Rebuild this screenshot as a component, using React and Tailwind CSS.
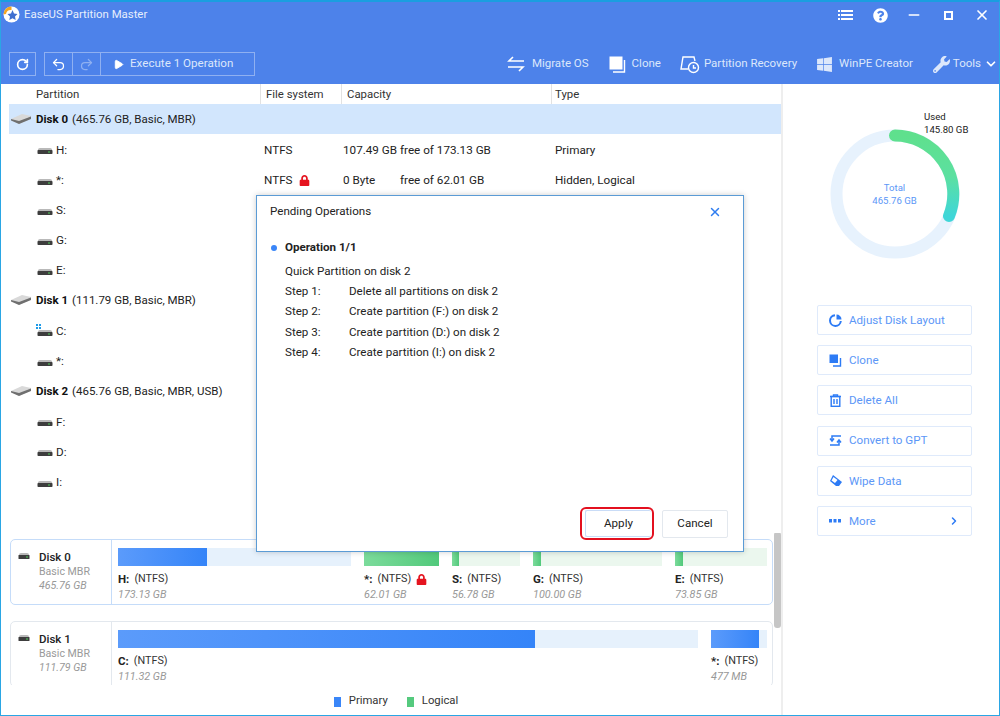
import React from "react";
import { ChevronDown, ChevronRight, Minus, Play, Redo2, RotateCw, Undo2, X } from "lucide-react";
import { FaLock, FaQuestionCircle, FaWindows, FaWrench } from "react-icons/fa";

const font = "font-['Roboto','Noto_Sans',sans-serif]";

function DriveIcon({ windows }) {
  return (
    <svg width="18" height="14" viewBox="0 0 18 14" className="shrink-0">
      {windows && (
        <g fill="#1e9be8">
          <rect x="0" y="0" width="2" height="2" />
          <rect x="3" y="0" width="2" height="2" />
          <rect x="0" y="3" width="2" height="2" />
          <rect x="3" y="3" width="2" height="2" />
        </g>
      )}
      <path d="M2 7.5 Q2 6 4 6 H14 Q16 6 16 7.5 V8 H2Z" fill="#b9b9b9" />
      <rect x="1.5" y="8" width="15" height="4" rx="0.8" fill="#3d3d3d" />
      <rect x="12" y="9.5" width="2" height="1" fill="#4fd05a" />
    </svg>
  );
}

function DiskIcon() {
  return (
    <svg width="22" height="12" viewBox="0 0 22 12" className="shrink-0">
      <path d="M1 6 L12 1 L21 3 L20 6 L9 11Z" fill="#d9d9d9" />
      <path d="M1 6 L9 8 L21 3.5 L21 6 L9 11 L1 7.5Z" fill="#6f6f6f" />
    </svg>
  );
}

function DiskRow({ name, info }) {
  return (
    <div className="h-[30.3px] flex items-center pl-[1px] text-[11.5px] text-[#222]">
      <div className="w-[26px]">
        <DiskIcon />
      </div>
      <span className="font-bold text-[#111] pt-[1px]">{name}</span>
      <span className="ml-1 pt-[1px]">{info}</span>
    </div>
  );
}

function PartRow({ name, fs, lock, free, of, type, windows }) {
  return (
    <div className="h-[30.2px] grid grid-cols-[255px_79px_212px_1fr] items-center text-[11.7px] text-[#222]">
      <div className="flex items-center pl-[27px] gap-[1px]">
        <DriveIcon windows={windows} />
        <span className="ml-[1px] pt-[2px]">{name}</span>
      </div>
      <div className="flex items-center gap-[6px] pt-[2px]">
        {fs}
        {lock && <FaLock className="text-[#e5141f]" size={11} />}
      </div>
      <div className="flex whitespace-nowrap pt-[2px]">
        <span className="w-[57px]">{free}</span>
        <span>{of}</span>
      </div>
      <div className="pt-[2px]">{type}</div>
    </div>
  );
}

function Segment({ width, fill, color, name, lock, size }) {
  const track = color === "blue" ? "bg-[#e6f1fc]" : "bg-[#ebf7ee]";
  const bar =
    color === "blue"
      ? "bg-gradient-to-r from-[#5b9bfb] to-[#3484f8]"
      : "bg-gradient-to-r from-[#7bdb9b] to-[#51c97b]";
  return (
    <div className="shrink-0" style={{ width }}>
      <div className={`h-[18px] ${track}`}>
        <div className={`h-full ${bar}`} style={{ width: fill }} />
      </div>
      <div className="mt-[4px] flex items-center text-[10.8px] leading-[18px] text-[#333]">
        <span className="font-bold mr-[5px] text-[#222] text-[11.5px]">{name}</span>
        (NTFS)
        {lock && <FaLock className="ml-[5px] text-[#e5141f]" size={11} />}
      </div>
      <div className="text-[10.8px] leading-[13px] italic text-[#999]">{size}</div>
    </div>
  );
}

function DiskCard({ name, type, size, active, children }) {
  return (
    <div
      className={`flex shrink-0 rounded-[5px] border h-[66px] ${
        active ? "border-[#c5dcf9]" : "border-[#e3e8ee]"
      }`}
    >
      <div className="w-[101px] shrink-0 border-r border-inherit flex pl-[7px] pt-[10px]">
        <div className="w-[21px] pt-[2px]">
          <svg width="12" height="8" viewBox="0 0 12 8">
            <path d="M1 3 Q1 1 3 1 H9 Q11 1 11 3Z" fill="#b9b9b9" />
            <rect x="0.5" y="3" width="11" height="4" rx="0.6" fill="#3d3d3d" />
            <rect x="8" y="4.5" width="2" height="1" fill="#4fd05a" />
          </svg>
        </div>
        <div className="text-[10.6px] leading-[14px] text-[#999]">
          <div className="text-[11.5px] font-medium text-[#222]">{name}</div>
          <div className="mt-[1px]">{type}</div>
          <div className="italic">{size}</div>
        </div>
      </div>
      <div className="flex-1 flex gap-[13px] pl-[6px] pt-[8px]">{children}</div>
    </div>
  );
}

function SideButton({ icon, label, arrow }) {
  return (
    <div className="h-[30px] flex items-center rounded-[2px] border border-[#dfeafb] pl-[11px] pr-[11px] text-[11.6px] text-[#5c97f7]">
      <div className="w-[20px] text-[#2d7bf5] flex items-center">{icon}</div>
      <span className="flex-1 pt-[1px]">{label}</span>
      {arrow && <ChevronRight size={12} strokeWidth={3} className="text-[#2d7bf5]" />}
    </div>
  );
}

export default function App() {
  return (
    <div className={`relative w-[1000px] h-[716px] overflow-hidden bg-white border-x border-b border-t-2 border-x-[#2aa6e4] border-b-[#2aa6e4] border-t-[#1a9ee0] flex flex-col ${font}`}>
      {/* title bar + toolbar */}
      <div className="h-[82px] shrink-0 bg-[#4d82ea] text-white flex flex-col">
        <div className="h-[50px] flex items-start justify-between">
          <div className="flex items-center pt-[3px] pl-[2px] gap-[4px]">
            <svg width="17" height="17" viewBox="0 0 17 17">
              <circle cx="8.5" cy="8.5" r="8" fill="#fff" />
              <path d="M0.5 8.5 A8 8 0 0 1 8.5 0.5 V4 A5 5 0 0 0 3 8Z" fill="#f5a623" />
              <path d="M9.5 4 L11 7.5 L14.5 8 L12 10.5 L12.7 14 L9.5 12.3 L6.3 14 L7 10.5 L4.5 8 L8 7.5Z" fill="#3f6fd0" />
            </svg>
            <span className="text-[11.4px] text-[#e6eefc] pt-[1px]">EaseUS Partition Master</span>
          </div>
          <div className="flex items-center pt-[5px] mr-[9px] gap-[18.5px]">
            <svg width="16" height="12" viewBox="0 0 16 12" fill="#fff">
              <rect x="0" y="1" width="2" height="2" />
              <rect x="3" y="1" width="12" height="2" />
              <rect x="0" y="5" width="2" height="2" />
              <rect x="3" y="5" width="12" height="2" />
              <rect x="0" y="9" width="2" height="2" />
              <rect x="3" y="9" width="12" height="2" />
            </svg>
            <FaQuestionCircle size={15} />
            <Minus size={16} strokeWidth={2.5} />
            <div className="w-[9px] h-[9px] mx-[3px] border-2 border-white" />
            <X size={16} strokeWidth={2.5} />
          </div>
        </div>
        <div className="flex items-center pl-[8px] text-[11.6px] text-[#dce7fb]">
          <div className="w-[27px] h-[24px] border border-[#8fb0f1] flex items-center justify-center">
            <RotateCw size={13} strokeWidth={3} className="text-white" />
          </div>
          <div className="ml-[8px] h-[24px] flex border border-[#8fb0f1]">
            <div className="w-[28px] border-r border-[#8fb0f1] flex items-center justify-center">
              <Undo2 size={15} strokeWidth={2} className="text-white" />
            </div>
            <div className="w-[28px] border-r border-[#8fb0f1] flex items-center justify-center">
              <Redo2 size={15} strokeWidth={2} className="text-[#8fb0f1]" />
            </div>
            <div className="w-[153px] flex items-center pl-[12px] gap-[6px]">
              <Play size={11} fill="#fff" className="text-white" />
              Execute 1 Operation
            </div>
          </div>
          <div className="ml-auto flex items-center text-[11.5px]">
            <div className="flex items-center gap-[7px]">
              <svg width="18" height="17" viewBox="0 0 18 17" fill="none" stroke="#fff" strokeWidth="1.6">
                <path d="M17 5 H2 L6 1" />
                <path d="M1 11 H16 L12 15" />
              </svg>
              Migrate OS
            </div>
            <div className="ml-[20px] flex items-center gap-[6px]">
              <svg width="17" height="17" viewBox="0 0 17 17">
                <rect x="0.5" y="0.5" width="13" height="13" fill="#fff" />
                <path d="M15.5 4 V16 H4" fill="none" stroke="#fff" strokeWidth="1.4" />
              </svg>
              Clone
            </div>
            <div className="ml-[19px] flex items-center gap-[4px]">
              <svg width="20" height="19" viewBox="0 0 20 19" fill="none" stroke="#fff" strokeWidth="1.4">
                <path d="M8 14 H1 L3 2 H14 L15 6" />
                <circle cx="13.5" cy="12.5" r="5" />
                <path d="M13.5 10 V13 H16" />
              </svg>
              Partition Recovery
            </div>
            <div className="ml-[19px] flex items-center gap-[6px]">
              <FaWindows size={17} />
              WinPE Creator
            </div>
            <div className="ml-[20px] flex items-center gap-[3px]">
              <FaWrench size={17} />
              Tools
              <ChevronDown size={14} strokeWidth={3} className="text-white mr-[1px]" />
            </div>
          </div>
        </div>
      </div>

      <div className="flex-1 flex min-h-0">
        {/* partition list and disk map */}
        <div className="w-[782px] shrink-0 flex flex-col border-r-2 border-[#eeeeee]">
          <div className="pl-[8px] h-[449px] shrink-0">
            <div className="h-[20px] grid grid-cols-[251px_81px_210px_1fr] items-center text-[11.4px] text-[#333]">
              <div className="pl-[27px] pt-[2px]">Partition</div>
              <div className="h-full pl-[5px] pt-[2px] border-l border-[#e2e2e2] flex items-center">File system</div>
              <div className="h-full pl-[5px] pt-[2px] border-l border-[#e2e2e2] flex items-center">Capacity</div>
              <div className="h-full pl-[3px] pt-[2px] border-l border-[#e2e2e2] flex items-center">Type</div>
            </div>
            <div className="bg-[#d2e6fd]">
              <DiskRow name="Disk 0" info="(465.76 GB, Basic, MBR)" />
            </div>
            <PartRow name="H:" fs="NTFS" free="107.49 GB" of="free of 173.13 GB" type="Primary" />
            <PartRow name="*:" fs="NTFS" lock free="0 Byte" of="free of 62.01 GB" type="Hidden, Logical" />
            <PartRow name="S:" />
            <PartRow name="G:" />
            <PartRow name="E:" />
            <DiskRow name="Disk 1" info="(111.79 GB, Basic, MBR)" />
            <PartRow name="C:" windows />
            <PartRow name="*:" />
            <DiskRow name="Disk 2" info="(465.76 GB, Basic, MBR, USB)" />
            <PartRow name="F:" />
            <PartRow name="D:" />
            <PartRow name="I:" />
          </div>

          <div className="relative h-[152px] shrink-0 overflow-hidden pl-[9px] pr-[8px] pt-[6px] flex flex-col gap-[16px]">
            <DiskCard name="Disk 0" type="Basic MBR" size="465.76 GB" active>
              <Segment width={233} fill={89} color="blue" name="H:" size="173.13 GB" />
              <Segment width={75} fill={75} color="green" name="*:" lock size="62.01 GB" />
              <Segment width={68} fill={7} color="green" name="S:" size="56.78 GB" />
              <Segment width={129} fill={8} color="green" name="G:" size="100.00 GB" />
              <Segment width={92} fill={8} color="green" name="E:" size="73.85 GB" />
            </DiskCard>
            <DiskCard name="Disk 1" type="Basic MBR" size="111.79 GB">
              <Segment width={580} fill={417} color="blue" name="C:" size="111.32 GB" />
              <Segment width={56} fill={48} color="blue" name="*:" size="477 MB" />
            </DiskCard>
            <div className="absolute right-0 top-0 mt-[-1px] w-[7px] h-[96px] rounded-[3px] bg-[#c6c6c6]" />
          </div>

          <div className="flex-1 flex items-center justify-center gap-[19px] text-[11.3px] text-[#333] pl-[10px] pt-[3px] bg-white">
            <div className="flex items-center gap-[8px]">
              <div className="w-[7px] h-[10px] bg-[#3a86f8]" />
              Primary
            </div>
            <div className="flex items-center gap-[8px]">
              <div className="w-[7px] h-[10px] bg-[#55ca7e]" />
              Logical
            </div>
          </div>
        </div>

        {/* right side */}
        <div className="flex-1 flex flex-col">
          <div className="relative h-[221px] shrink-0 flex justify-center">
            <div className="relative w-[130px] h-[130px] mt-[45px] ml-[7px]">
              <svg width="130" height="130" viewBox="0 0 130 130">
                <defs>
                  <linearGradient id="used" x1="0" y1="0" x2="0" y2="1">
                    <stop offset="0" stopColor="#5fe08d" />
                    <stop offset="0.5" stopColor="#5ce0a0" />
                    <stop offset="1" stopColor="#3fd6d8" />
                  </linearGradient>
                </defs>
                <circle cx="65" cy="65" r="58.5" fill="none" stroke="#e7f2fd" strokeWidth="12" />
                <path d="M65 6.5 A58.5 58.5 0 0 1 119 87" fill="none" stroke="url(#used)" strokeWidth="12" strokeLinecap="round" />
              </svg>
              <div className="absolute inset-0 flex flex-col items-center justify-center text-[9.6px] leading-[13px] text-[#5c97f7]">
                <div>Total</div>
                <div>465.76 GB</div>
              </div>
            </div>
            <div className="absolute left-[141px] top-[26px] text-[9.6px] leading-[13px] text-[#222]">
              <div>Used</div>
              <div>145.80 GB</div>
            </div>
          </div>
          <div className="pl-[34px] pr-[27px] flex flex-col gap-[10.2px]">
            <SideButton
              label="Adjust Disk Layout"
              icon={
                <svg width="13" height="13" viewBox="0 0 13 13">
                  <path d="M6 1.2 A5.4 5.4 0 1 0 11.8 7" fill="none" stroke="currentColor" strokeWidth="2" />
                  <path d="M7.5 0.5 A5 5 0 0 1 12.5 5.5 H7.5Z" fill="currentColor" />
                </svg>
              }
            />
            <SideButton
              label="Clone"
              icon={
                <svg width="13" height="13" viewBox="0 0 13 13">
                  <rect x="0.5" y="0.5" width="8.5" height="8.5" fill="currentColor" />
                  <path d="M11.5 4 V12 H4" fill="none" stroke="currentColor" strokeWidth="1.4" />
                </svg>
              }
            />
            <SideButton
              label="Delete All"
              icon={
                <svg width="13" height="13" viewBox="0 0 13 13" fill="none" stroke="currentColor" strokeWidth="1.4">
                  <path d="M1 2.5 H12" />
                  <path d="M4.5 2.5 V1 H8.5 V2.5" />
                  <rect x="2.2" y="2.5" width="8.6" height="9.8" />
                  <path d="M5 5 V10 M8 5 V10" />
                </svg>
              }
            />
            <SideButton
              label="Convert to GPT"
              icon={
                <svg width="13" height="13" viewBox="0 0 13 13" fill="none" stroke="currentColor" strokeWidth="1.5">
                  <path d="M12 2 H3 V6" />
                  <path d="M1 4.5 L3 7 L5 4.5" />
                  <path d="M1 11 H10 V7" />
                  <path d="M8 8.5 L10 6 L12 8.5" />
                </svg>
              }
            />
            <SideButton
              label="Wipe Data"
              icon={
                <svg width="14" height="13" viewBox="0 0 14 13" fill="currentColor">
                  <path d="M4 1 L13 8 L10 12 H7 L1 7 Z" />
                  <path d="M4.5 3 L2.5 6.5 L6 9 L8.5 6 Z" fill="#fff" />
                </svg>
              }
            />
            <SideButton
              label="More"
              arrow
              icon={
                <svg width="12" height="4" viewBox="0 0 12 4" fill="currentColor">
                  <rect x="0" y="0" width="3" height="3.5" />
                  <rect x="4.5" y="0" width="3" height="3.5" />
                  <rect x="9" y="0" width="3" height="3.5" />
                </svg>
              }
            />
          </div>
        </div>
      </div>

      {/* pending operations dialog */}
      <div className="absolute left-[255px] top-[193px] w-[488px] h-[357px] bg-white border border-[#5b9bd5] shadow-[0_0_6px_rgba(0,0,0,0.2)] flex flex-col text-[11.6px] text-[#222]">
        <div className="h-[30px] flex items-center justify-between pl-[13px] pr-[21px] pt-[1px]">
          Pending Operations
          <X size={14} strokeWidth={2.5} className="text-[#2f7df0]" />
        </div>
        <div className="pl-[14px] mt-[12px] flex items-center h-[20px] gap-[8px] font-bold">
          <div className="w-[6px] h-[6px] rounded-full bg-[#3a86f8]" />
          Operation 1/1
        </div>
        <div className="pl-[28px] mt-[3px] leading-[20.2px]">
          <div>Quick Partition on disk 2</div>
          <div className="flex"><span className="w-[64px]">Step 1:</span>Delete all partitions on disk 2</div>
          <div className="flex"><span className="w-[64px]">Step 2:</span>Create partition (F:) on disk 2</div>
          <div className="flex"><span className="w-[64px]">Step 3:</span>Create partition (D:) on disk 2</div>
          <div className="flex"><span className="w-[64px]">Step 4:</span>Create partition (I:) on disk 2</div>
        </div>
        <div className="mt-auto mb-[11px] flex justify-end items-center gap-[8px] pr-[15px]">
          <div className="rounded-[6px] border-2 border-[#e3101f]">
            <div className="w-[66px] h-[27px] ml-[3px] mr-[1px] my-[1px] rounded-[2px] border border-[#c9dcf7] border-r-0 flex items-center justify-center">
              Apply
            </div>
          </div>
          <div className="w-[66px] h-[28px] rounded-[2px] border border-[#e3e8ee] flex items-center justify-center">
            Cancel
          </div>
        </div>
      </div>
    </div>
  );
}
